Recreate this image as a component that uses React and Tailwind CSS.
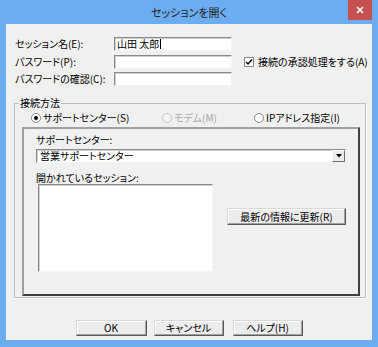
import React from "react";

const sunken =
  "border border-t-[#8a8a8a] border-l-[#8a8a8a] border-b-[#f4f4f4] border-r-[#f4f4f4] shadow-[inset_1px_1px_0_#cfcfcf] bg-white";

function Btn({ children, className = "" }) {
  return (
    <div
      className={
        "flex items-center justify-center bg-[#ececec] border border-t-[#d8d8d8] border-l-[#d8d8d8] border-b-[#5a5a5a] border-r-[#5a5a5a] shadow-[inset_-1px_-1px_0_#a0a0a0,inset_1px_1px_0_#ffffff] " +
        className
      }
    >
      {children}
    </div>
  );
}

function Radio({ checked, disabled, label, className = "" }) {
  return (
    <div className={"flex items-center " + className}>
      <div
        className={
          "w-[10px] h-[10px] rounded-full border flex items-center justify-center " +
          (disabled ? "border-[#c4c4c4] bg-[#f4f4f4]" : "border-[#8a8a8a] bg-white")
        }
      >
        {checked && <div className="w-[4px] h-[4px] rounded-full bg-black" />}
      </div>
      <span className={"ml-[2px] leading-[12px] " + (disabled ? "text-[#a8a8a8]" : "")}>
        {label}
      </span>
    </div>
  );
}

export default function App() {
  return (
    <div className="w-[378px] h-[347px] bg-[#6cadf1] flex flex-col font-['Noto_Sans_CJK_JP',sans-serif] text-[10px] text-black [font-feature-settings:'palt']">
      {/* title bar */}
      <div className="h-[24px] grid grid-cols-[1fr_auto_1fr]">
        <div />
        <div className="pt-[5px] text-[11px] leading-[15px] text-[#222]">セッションを開く</div>
        <div className="flex justify-end pr-[6px]">
          <div className="w-[24px] h-[20px] bg-[#c75050] flex items-center justify-center">
            <svg width="8" height="8" viewBox="0 0 8 8">
              <path d="M1 1L7 7M7 1L1 7" stroke="white" strokeWidth="1.6" />
            </svg>
          </div>
        </div>
      </div>

      {/* content */}
      <div className="mx-[6px] h-[316px] bg-[#f0f0f0] flex flex-col">
        <div className="pt-[13px] pl-[9px] flex flex-col">
          <div className="flex items-center h-[14px]">
            <span className="w-[99px] leading-[12px]">セッション名(E):</span>
            <div className={"w-[118px] h-[14px] flex items-center pl-[2px] leading-[12px] " + sunken}>
              山田 太郎<span className="w-px h-[10px] bg-black ml-[1px]" />
            </div>
          </div>
          <div className="flex items-center h-[14px] mt-[4px]">
            <span className="w-[99px] leading-[12px]">パスワード(P):</span>
            <div className={"w-[118px] h-[14px] " + sunken} />
            <div className="ml-[12px] w-[10px] h-[10px] border border-[#8a8a8a] bg-white flex items-center justify-center">
              <svg width="8" height="8" viewBox="0 0 8 8">
                <path d="M1 4L3 6L7 1.5" stroke="black" strokeWidth="1.4" fill="none" />
              </svg>
            </div>
            <span className="ml-[4px] leading-[12px]">接続の承認処理をする(A)</span>
          </div>
          <div className="flex items-center h-[14px] mt-[3px]">
            <span className="w-[99px] leading-[12px]">パスワードの確認(C):</span>
            <div className={"w-[118px] h-[14px] " + sunken} />
          </div>
        </div>

        {/* group box */}
        <fieldset className="mt-[11px] mx-[8px] border border-[#bcbcbc] shadow-[1px_1px_0_#ffffff] pb-[1px]">
          <legend className="ml-[4px] px-[1px] leading-[12px]">接続方法</legend>
          <div className="flex items-center pl-[16px] pt-[3px] h-[15px]">
            <Radio checked label="サポートセンター(S)" className="w-[131px]" />
            <Radio disabled label="モデム(M)" className="w-[92px]" />
            <Radio label="IPアドレス指定(I)" />
          </div>
          <div className="mt-[3px] ml-[7px] mr-[5px] h-[169px] border-2 border-t-[#a0a0a0] border-l-[#a0a0a0] border-b-[#404040] border-r-[#404040] flex flex-col pl-[12px] pr-[12px]">
            <span className="mt-[5px] leading-[12px]">サポートセンター:</span>
            <div className={"mt-[3px] h-[14px] flex items-center " + sunken}>
              <span className="flex-1 pl-[3px] leading-[12px]">営業サポートセンター</span>
              <div className="w-[13px] h-[12px] bg-[#ececec] border border-t-[#ffffff] border-l-[#ffffff] border-b-[#6a6a6a] border-r-[#6a6a6a] flex items-center justify-center">
                <svg width="6" height="4" viewBox="0 0 6 4">
                  <path d="M0 0H6L3 3.5Z" fill="black" />
                </svg>
              </div>
            </div>
            <span className="mt-[9px] leading-[12px]">開かれているセッション:</span>
            <div className="flex items-start">
              <div className={"ml-[2px] w-[175px] h-[88px] " + sunken} />
              <Btn className="ml-[14px] mt-[24px] w-[119px] h-[17px] leading-[12px]">
                最新の情報に更新(R)
              </Btn>
            </div>
          </div>
        </fieldset>

        {/* buttons */}
        <div className="mt-[22px] flex justify-center">
          <Btn className="w-[71px] h-[16px] leading-[12px]">OK</Btn>
          <Btn className="ml-[7px] w-[70px] h-[16px] leading-[12px]">キャンセル</Btn>
          <Btn className="ml-[9px] w-[70px] h-[16px] leading-[12px]">ヘルプ(H)</Btn>
        </div>
      </div>
    </div>
  );
}
